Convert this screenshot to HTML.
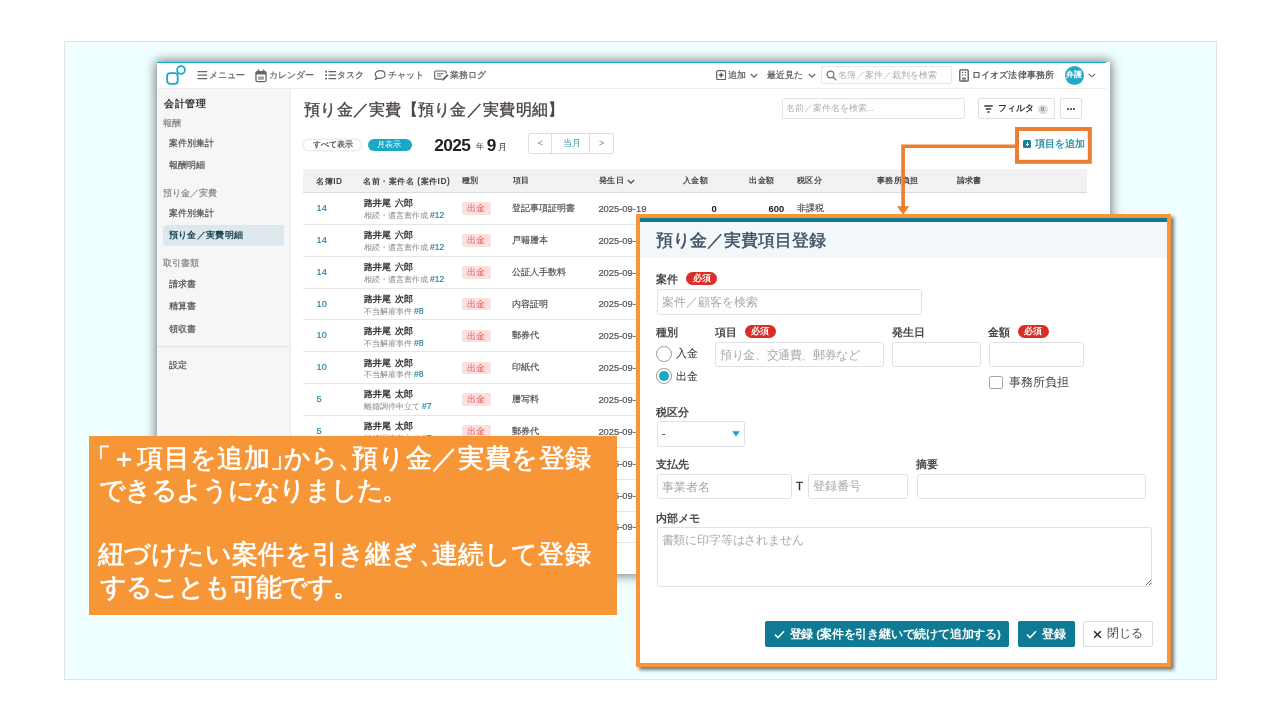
<!DOCTYPE html>
<html lang="ja"><head><meta charset="utf-8"><title>預り金／実費項目登録</title>
<style>
*{box-sizing:border-box;margin:0;padding:0}
html,body{width:1280px;height:720px;overflow:hidden;background:#fff}
body{position:relative;font-family:"Liberation Sans",sans-serif;color:#444}
.a{position:absolute}
.t{position:absolute;white-space:nowrap;line-height:1}
.app,.modal,.note{will-change:transform}
.b{font-weight:bold}
.panel{left:64px;top:41px;width:1153px;height:639px;background:#f0ffff;border:1px solid #e2e2e2}
.app{left:157px;top:62px;width:953px;height:512px;background:#fff;box-shadow:0 0 11px 1px rgba(0,0,0,.55);overflow:hidden}
.modal{left:636px;top:214px;width:535px;height:453px;background:#fff;border:4px solid #f79636;box-shadow:3px 3px 3.5px rgba(0,0,0,.52);overflow:hidden}
.note{left:89px;top:436px;width:528px;height:179px;background:#f79636;color:#fff}

.nv{color:#645e5e;-webkit-text-stroke:0.2px #645e5e}
.sb{color:#555050;-webkit-text-stroke:0.2px #555050}
.sh{color:#858080;-webkit-text-stroke:0.15px #858080}
.th{color:#4a4646;font-weight:bold;letter-spacing:0.4px;margin-left:0.5px}
.td{color:#565252;-webkit-text-stroke:0.2px #565252}
.tl{color:#2589a6;-webkit-text-stroke:0.2px #2589a6}
.pill{border-radius:7px}

.ml{color:#4a4646;font-weight:bold}
.mi{border:1px solid #dde2e8;border-radius:2.500px;background:#fff}
.ph{color:#a9a9a9}
.req{background:#d92d27;border-radius:6.500px}

.nl{position:absolute;left:8.5px;height:32px;line-height:32px;font-size:26px;color:#fff;white-space:nowrap;-webkit-text-stroke:0.65px #fff}
.nj{text-align:justify;text-align-last:justify}
.pl{margin-left:-0.5em}
.pr{margin-right:-0.5em}
</style></head>
<body>
<div class="a panel"></div>
<div class="a app">
<div class="a " style="left:0px;top:0px;width:949px;height:1.3px;background:#1aa9c9"></div>
<div class="a " style="left:0px;top:26px;width:949px;height:1px;background:#ececec"></div>
<svg class="a" style="left:8.2px;top:2.1px;" width="22.00" height="22.00" viewBox="0 0 22 22"><rect x="2.1" y="9.2" width="10.6" height="10.6" rx="3" fill="none" stroke="#1aa9c9" stroke-width="1.8"/><circle cx="16" cy="6" r="3.9" fill="none" stroke="#1aa9c9" stroke-width="1.8"/></svg>
<svg class="a" style="left:40px;top:8px;" width="11.00" height="10.00" viewBox="0 0 11 10"><path d="M0.5 1.6h9.7M0.5 5.1h9.7M0.5 8.6h9.7" stroke="#6a6464" stroke-width="1.4" fill="none"/></svg>
<div class="t nv" style="left:52.15px;top:9.1px;font-size:8.8px;">メニュー</div>
<svg class="a" style="left:98px;top:6.5px;" width="12.00" height="14.00" viewBox="0 0 12 14"><rect x="0.95" y="2.6" width="10.1" height="10" rx="1.5" fill="none" stroke="#6a6464" stroke-width="1.3"/><path d="M0.9 2.6h10.2v2.9H0.9z" fill="#6a6464"/><path d="M3.4 0.6v2.6M8.6 0.6v2.6" stroke="#6a6464" stroke-width="1.5"/><path d="M3.3 7.4h5.4v3.3H3.3z" fill="#8a8585"/><path d="M5.1 7.4v3.3M6.9 7.4v3.3" stroke="#fff" stroke-width="0.5"/></svg>
<div class="t nv" style="left:111.55px;top:9.1px;font-size:8.8px;">カレンダー</div>
<svg class="a" style="left:167.5px;top:8px;" width="12.00" height="10.00" viewBox="0 0 12 10"><path d="M3.5 1.6h7.6M3.5 5.1h7.6M3.5 8.6h7.6" stroke="#6a6464" stroke-width="1.4" fill="none"/><path d="M0.2 1.6h1.8M0.2 5.1h1.8M0.2 8.6h1.8" stroke="#6a6464" stroke-width="1.8" fill="none"/></svg>
<div class="t nv" style="left:180.25px;top:9.1px;font-size:8.8px;">タスク</div>
<svg class="a" style="left:217px;top:7.3px;" width="12.00" height="12.00" viewBox="0 0 12 12"><path d="M6.1 1.7c2.8 0 4.9 1.6 4.9 3.8s-2.100 3.800-4.900 3.800c-.6 0-1.200-.1-1.700-.2L1.600 10.200l.9-2.200C1.600 7.200 1.200 6.400 1.200 5.500c0-2.200 2.100-3.800 4.900-3.800z" fill="none" stroke="#6a6464" stroke-width="1.2"/></svg>
<div class="t nv" style="left:230.95px;top:9.1px;font-size:8.8px;">チャット</div>
<svg class="a" style="left:276.5px;top:8px;" width="15.00" height="12.00" viewBox="0 0 15 12"><path d="M8 9.200H1.800c-.6 0-1.100-.5-1.100-1.100V2.100c0-.6.5-1.100 1.100-1.100h9.300c.6 0 1.100.5 1.100 1.100v1.700" fill="none" stroke="#6a6464" stroke-width="1.2"/><path d="M3 3.700h6.500M3 6h4.200" stroke="#6a6464" stroke-width="1.100"/><path d="M13.300 4.200l1.200 1.200-4.900 4.900-1.700.5.500-1.700z" fill="#5a5555"/></svg>
<div class="t nv" style="left:292.65px;top:9.1px;font-size:8.8px;">業務ログ</div>
<svg class="a" style="left:559.2px;top:7.9px;" width="10.30" height="10.30" viewBox="0 0 11 11"><rect x="0.7" y="0.7" width="9.6" height="9.6" rx="1.5" fill="none" stroke="#645e5e" stroke-width="1.3"/><path d="M5.5 2.900v5.200M2.900 5.500h5.200" stroke="#4a4545" stroke-width="1.400"/></svg>
<div class="t nv" style="left:570.94px;top:9.15px;font-size:8.9px;color:#555050">追加</div>
<svg class="a" style="left:593px;top:11px;" width="8.00" height="6.00" viewBox="0 0 8 6"><path d="M0.8 1l3.200 3.200L7.200 1" fill="none" stroke="#6a6464" stroke-width="1.2"/></svg>
<div class="t nv" style="left:610.05px;top:9.2px;font-size:8.8px;color:#555050">最近見た</div>
<svg class="a" style="left:650.5px;top:11px;" width="8.00" height="6.00" viewBox="0 0 8 6"><path d="M0.8 1l3.200 3.200L7.200 1" fill="none" stroke="#6a6464" stroke-width="1.2"/></svg>
<div class="a " style="left:664.2px;top:3.6px;width:131px;height:18.8px;border:1px solid #e6e6e6;border-radius:2px;background:#fff"></div>
<svg class="a" style="left:669.3px;top:8px;" width="11.00" height="11.00" viewBox="0 0 11 11"><circle cx="4.500" cy="4.500" r="3.400" fill="none" stroke="#777" stroke-width="1.200"/><path d="M7 7l3.200 3.200" stroke="#777" stroke-width="1.300"/></svg>
<div class="t " style="left:681.24px;top:9.12px;font-size:8.95px;color:#ababab">名簿／案件／裁判を検索</div>
<svg class="a" style="left:801.5px;top:7.2px;" width="10.00" height="13.00" viewBox="0 0 10 13"><rect x="0.800" y="0.800" width="8.400" height="11.400" rx="1" fill="none" stroke="#555" stroke-width="1.300"/><path d="M3 3.300h1.200M5.800 3.300H7M3 5.800h1.200M5.800 5.800H7" stroke="#555" stroke-width="1.300"/><path d="M4 12v-3h2v3" fill="none" stroke="#555" stroke-width="1.100"/></svg>
<div class="t " style="left:815.03px;top:9.1px;font-size:9px;letter-spacing:0.1px;color:#4a4646;-webkit-text-stroke:0.2px #4a4646">ロイオズ法律事務所</div>
<div class="a " style="left:907.9px;top:3.7px;width:19.4px;height:19.4px;background:#23a9c8;border-radius:50%"></div>
<div class="t " style="left:908.92px;top:9.4px;font-size:8px;color:#fff;font-weight:bold">弁護</div>
<svg class="a" style="left:931px;top:11.2px;" width="7.80" height="5.20" viewBox="0 0 9 6"><path d="M0.800 1l3.700 3.400L8.200 1" fill="none" stroke="#6a6464" stroke-width="1.300"/></svg>
<div class="a " style="left:0px;top:27px;width:132.7px;height:485px;background:#f6f6f6"></div>
<div class="a " style="left:132.7px;top:27px;width:1px;height:485px;background:#ebebeb"></div>
<div class="t " style="left:6.92px;top:36.65px;font-size:10.3px;letter-spacing:0.7px;color:#3a3636;font-weight:bold">会計管理</div>
<div class="t sh" style="left:6.46px;top:56.62px;font-size:8.75px;">報酬</div>
<div class="t sb" style="left:11.74px;top:76.8px;font-size:9px;">案件別集計</div>
<div class="t sb" style="left:11.74px;top:99.3px;font-size:9px;">報酬明細</div>
<div class="t sh" style="left:6.46px;top:127.12px;font-size:8.75px;">預り金／実費</div>
<div class="t sb" style="left:11.74px;top:147.3px;font-size:9px;">案件別集計</div>
<div class="a " style="left:6px;top:163px;width:121.3px;height:21.3px;background:#dde8ec;border-radius:3px"></div>
<div class="t " style="left:11.73px;top:169.28px;font-size:9.05px;letter-spacing:0.35px;color:#1d4554;font-weight:bold">預り金／実費明細</div>
<div class="t sh" style="left:6.46px;top:197.43px;font-size:8.75px;">取引書類</div>
<div class="t sb" style="left:11.74px;top:217.85px;font-size:8.9px;">請求書</div>
<div class="t sb" style="left:11.74px;top:240.35px;font-size:8.9px;">精算書</div>
<div class="t sb" style="left:11.74px;top:262.85px;font-size:8.9px;">領収書</div>
<div class="a " style="left:0px;top:284.3px;width:132.7px;height:0.9px;background:#e3e3e3"></div>
<div class="t sb" style="left:11.74px;top:298.55px;font-size:8.9px;">設定</div>
<div class="t " style="left:147.07px;top:40.4px;font-size:15.6px;letter-spacing:0.27px;color:#4c4343;-webkit-text-stroke:0.35px #4c4343">預り金／実費【預り金／実費明細】</div>
<div class="a pill" style="left:146.2px;top:76.8px;width:58.8px;height:12px;background:#fff;border:1px solid #ececec;box-shadow:0 0 2px rgba(0,0,0,.12)"></div>
<div class="t " style="left:156.26px;top:79.03px;font-size:7.55px;color:#4a4646;-webkit-text-stroke:0.2px #4a4646">すべて表示</div>
<div class="a pill" style="left:211px;top:77px;width:44px;height:11.6px;background:#19a8c8"></div>
<div class="t " style="left:220.32px;top:78.8px;font-size:8px;color:#fff">月表示</div>
<div class="t " style="left:277.13px;top:75.45px;font-size:17.3px;letter-spacing:-0.6px;color:#222;font-weight:bold">2025</div>
<div class="t " style="left:318.59px;top:80.35px;font-size:8.3px;color:#333">年</div>
<div class="t " style="left:329.73px;top:75.45px;font-size:17.3px;color:#222;font-weight:bold">9</div>
<div class="t " style="left:341.24px;top:80.8px;font-size:9px;color:#333">月</div>
<div class="a " style="left:370.5px;top:71.2px;width:86.3px;height:20.6px;border:1px solid #dedede;border-radius:2px;background:#fff"></div>
<div class="a " style="left:394.3px;top:71.2px;width:0.9px;height:20.6px;background:#dedede"></div>
<div class="a " style="left:432.3px;top:71.2px;width:0.9px;height:20.6px;background:#dedede"></div>
<div class="t " style="left:380.84px;top:76.9px;font-size:9px;color:#3a9ab5">&lt;</div>
<div class="t " style="left:405.62px;top:77px;font-size:9.2px;color:#3a9ab5">当月</div>
<div class="t " style="left:442.03px;top:76.9px;font-size:9px;color:#3a9ab5">&gt;</div>
<div class="a " style="left:624.9px;top:36.4px;width:183.1px;height:20.4px;border:1px solid #e4e4e4;border-radius:2px;background:#fff"></div>
<div class="t " style="left:628.76px;top:42.42px;font-size:8.75px;color:#b0b0b0">名前／案件名を検索...</div>
<div class="a " style="left:821px;top:36.4px;width:77.3px;height:20.4px;border:1px solid #e0e0e0;border-radius:2px;background:#fff"></div>
<svg class="a" style="left:827.3px;top:43px;" width="9.00" height="8.00" viewBox="0 0 9 8"><path d="M0.300 1h8.400M1.800 4h5.400M3.400 7h2.200" stroke="#333" stroke-width="1.300"/></svg>
<div class="t " style="left:840.56px;top:42.45px;font-size:8.7px;color:#333;font-weight:bold">フィルタ</div>
<div class="a " style="left:881.3px;top:42.7px;width:9.4px;height:9.4px;background:#dcdcdc;border-radius:50%"></div>
<div class="t " style="left:883.67px;top:44.4px;font-size:6.2px;color:#555">0</div>
<div class="a " style="left:903.3px;top:36.4px;width:21.3px;height:20.4px;border:1px solid #e0e0e0;border-radius:2px;background:#fff"></div>
<div class="a " style="left:909.8px;top:45.7px;width:2px;height:2px;background:#333;border-radius:50%"></div>
<div class="a " style="left:912.9px;top:45.7px;width:2px;height:2px;background:#333;border-radius:50%"></div>
<div class="a " style="left:916px;top:45.7px;width:2px;height:2px;background:#333;border-radius:50%"></div>
<div class="a " style="left:866.2px;top:78px;width:8.1px;height:8.1px;background:#167f9b;border-radius:1.5px"></div>
<div class="a " style="left:868.6px;top:81.5px;width:3.3px;height:1.1px;background:#fff"></div>
<div class="a " style="left:869.7px;top:80.4px;width:1.1px;height:3.3px;background:#fff"></div>
<div class="t " style="left:877.99px;top:76.85px;font-size:9.5px;letter-spacing:0.1px;color:#1f8ba5;-webkit-text-stroke:0.3px #1f8ba5">項目を追加</div>
<div class="a " style="left:146.2px;top:106.8px;width:784.3px;height:23.2px;background:#f2f2f2"></div>
<div class="a " style="left:146.2px;top:130px;width:784.3px;height:1px;background:#dcdcdc"></div>
<div class="t th" style="left:158.99px;top:115.1px;font-size:8.4px;">名簿ID</div>
<div class="t th" style="left:205.99px;top:115.1px;font-size:8.4px;letter-spacing:0.5px">名前・案件名 (案件ID)</div>
<div class="t th" style="left:304.3px;top:115.2px;font-size:8.2px;">種別</div>
<div class="t th" style="left:355.3px;top:115.2px;font-size:8.2px;">項目</div>
<div class="t th" style="left:441.5px;top:115.2px;font-size:8.2px;">発生日</div>
<svg class="a" style="left:469.5px;top:117px;" width="8.00" height="6.00" viewBox="0 0 8 6"><path d="M0.800 1l3.200 3.200L7.200 1" fill="none" stroke="#4a4646" stroke-width="1.200"/></svg>
<div class="t th" style="left:525.3px;top:115.2px;font-size:8.2px;">入金額</div>
<div class="t th" style="left:591.8px;top:115.2px;font-size:8.2px;">出金額</div>
<div class="t th" style="left:639.3px;top:115.2px;font-size:8.2px;">税区分</div>
<div class="t th" style="left:719.3px;top:115.2px;font-size:8.2px;">事務所負担</div>
<div class="t th" style="left:799px;top:115.2px;font-size:8.2px;">請求書</div>
<div class="a " style="left:146.2px;top:161.85px;width:784.3px;height:1px;background:#e6e6e6"></div>
<div class="t tl" style="left:159.52px;top:142.03px;font-size:9.2px;">14</div>
<div class="t " style="left:206.6px;top:136.3px;font-size:9.45px;color:#353131;font-weight:bold;word-spacing:1.4px">路井尾 六郎</div>
<div class="t " style="left:206.74px;top:149.12px;font-size:7.8px;color:#8a8686">相続・遺言書作成 <span class="tl" style="font-size:8.6px">#12</span></div>
<div class="a " style="left:305px;top:140.32px;width:28.8px;height:12.6px;background:#fce0e0;border-radius:2px"></div>
<div class="t " style="left:309.96px;top:142.28px;font-size:8.7px;color:#e15a5a">出金</div>
<div class="t td" style="left:355.23px;top:142.07px;font-size:9.1px;">登記事項証明書</div>
<div class="t td" style="left:441.4px;top:141.93px;font-size:9.4px;">2025-09-19</div>
<div class="t " style="right:393.2px;top:141.93px;font-size:9.4px;color:#222;font-weight:bold">0</div>
<div class="t " style="right:325.8px;top:141.93px;font-size:9.4px;color:#222;font-weight:bold">600</div>
<div class="t td" style="left:639.73px;top:142.07px;font-size:9.1px;">非課税</div>
<div class="a " style="left:146.2px;top:193.7px;width:784.3px;height:1px;background:#e6e6e6"></div>
<div class="t tl" style="left:159.52px;top:173.88px;font-size:9.2px;">14</div>
<div class="t " style="left:206.6px;top:168.15px;font-size:9.45px;color:#353131;font-weight:bold;word-spacing:1.4px">路井尾 六郎</div>
<div class="t " style="left:206.74px;top:180.97px;font-size:7.8px;color:#8a8686">相続・遺言書作成 <span class="tl" style="font-size:8.6px">#12</span></div>
<div class="a " style="left:305px;top:172.17px;width:28.8px;height:12.6px;background:#fce0e0;border-radius:2px"></div>
<div class="t " style="left:309.96px;top:174.12px;font-size:8.7px;color:#e15a5a">出金</div>
<div class="t td" style="left:355.23px;top:173.92px;font-size:9.1px;">戸籍謄本</div>
<div class="t td" style="left:441.4px;top:173.78px;font-size:9.4px;">2025-09-18</div>
<div class="a " style="left:146.2px;top:225.55px;width:784.3px;height:1px;background:#e6e6e6"></div>
<div class="t tl" style="left:159.52px;top:205.72px;font-size:9.2px;">14</div>
<div class="t " style="left:206.6px;top:200px;font-size:9.45px;color:#353131;font-weight:bold;word-spacing:1.4px">路井尾 六郎</div>
<div class="t " style="left:206.74px;top:212.82px;font-size:7.8px;color:#8a8686">相続・遺言書作成 <span class="tl" style="font-size:8.6px">#12</span></div>
<div class="a " style="left:305px;top:204.02px;width:28.8px;height:12.6px;background:#fce0e0;border-radius:2px"></div>
<div class="t " style="left:309.96px;top:205.97px;font-size:8.7px;color:#e15a5a">出金</div>
<div class="t td" style="left:355.23px;top:205.77px;font-size:9.1px;">公証人手数料</div>
<div class="t td" style="left:441.4px;top:205.62px;font-size:9.4px;">2025-09-17</div>
<div class="a " style="left:146.2px;top:257.4px;width:784.3px;height:1px;background:#e6e6e6"></div>
<div class="t tl" style="left:159.52px;top:237.57px;font-size:9.2px;">10</div>
<div class="t " style="left:206.6px;top:231.85px;font-size:9.45px;color:#353131;font-weight:bold;word-spacing:1.4px">路井尾 次郎</div>
<div class="t " style="left:206.74px;top:244.68px;font-size:7.8px;color:#8a8686">不当解雇事件 <span class="tl" style="font-size:8.6px">#8</span></div>
<div class="a " style="left:305px;top:235.88px;width:28.8px;height:12.6px;background:#fce0e0;border-radius:2px"></div>
<div class="t " style="left:309.96px;top:237.82px;font-size:8.7px;color:#e15a5a">出金</div>
<div class="t td" style="left:355.23px;top:237.62px;font-size:9.1px;">内容証明</div>
<div class="t td" style="left:441.4px;top:237.48px;font-size:9.4px;">2025-09-16</div>
<div class="a " style="left:146.2px;top:289.25px;width:784.3px;height:1px;background:#e6e6e6"></div>
<div class="t tl" style="left:159.52px;top:269.42px;font-size:9.2px;">10</div>
<div class="t " style="left:206.6px;top:263.7px;font-size:9.45px;color:#353131;font-weight:bold;word-spacing:1.4px">路井尾 次郎</div>
<div class="t " style="left:206.74px;top:276.52px;font-size:7.8px;color:#8a8686">不当解雇事件 <span class="tl" style="font-size:8.6px">#8</span></div>
<div class="a " style="left:305px;top:267.72px;width:28.8px;height:12.6px;background:#fce0e0;border-radius:2px"></div>
<div class="t " style="left:309.96px;top:269.67px;font-size:8.7px;color:#e15a5a">出金</div>
<div class="t td" style="left:355.23px;top:269.47px;font-size:9.1px;">郵券代</div>
<div class="t td" style="left:441.4px;top:269.32px;font-size:9.4px;">2025-09-12</div>
<div class="a " style="left:146.2px;top:321.1px;width:784.3px;height:1px;background:#e6e6e6"></div>
<div class="t tl" style="left:159.52px;top:301.27px;font-size:9.2px;">10</div>
<div class="t " style="left:206.6px;top:295.55px;font-size:9.45px;color:#353131;font-weight:bold;word-spacing:1.4px">路井尾 次郎</div>
<div class="t " style="left:206.74px;top:308.38px;font-size:7.8px;color:#8a8686">不当解雇事件 <span class="tl" style="font-size:8.6px">#8</span></div>
<div class="a " style="left:305px;top:299.57px;width:28.8px;height:12.6px;background:#fce0e0;border-radius:2px"></div>
<div class="t " style="left:309.96px;top:301.52px;font-size:8.7px;color:#e15a5a">出金</div>
<div class="t td" style="left:355.23px;top:301.32px;font-size:9.1px;">印紙代</div>
<div class="t td" style="left:441.4px;top:301.18px;font-size:9.4px;">2025-09-11</div>
<div class="a " style="left:146.2px;top:352.95px;width:784.3px;height:1px;background:#e6e6e6"></div>
<div class="t tl" style="left:159.52px;top:333.12px;font-size:9.2px;">5</div>
<div class="t " style="left:206.6px;top:327.4px;font-size:9.45px;color:#353131;font-weight:bold;word-spacing:1.4px">路井尾 太郎</div>
<div class="t " style="left:206.74px;top:340.23px;font-size:7.8px;color:#8a8686">離婚調停申立て <span class="tl" style="font-size:8.6px">#7</span></div>
<div class="a " style="left:305px;top:331.43px;width:28.8px;height:12.6px;background:#fce0e0;border-radius:2px"></div>
<div class="t " style="left:309.96px;top:333.38px;font-size:8.7px;color:#e15a5a">出金</div>
<div class="t td" style="left:355.23px;top:333.18px;font-size:9.1px;">謄写料</div>
<div class="t td" style="left:441.4px;top:333.03px;font-size:9.4px;">2025-09-10</div>
<div class="a " style="left:146.2px;top:384.8px;width:784.3px;height:1px;background:#e6e6e6"></div>
<div class="t tl" style="left:159.52px;top:364.98px;font-size:9.2px;">5</div>
<div class="t " style="left:206.6px;top:359.25px;font-size:9.45px;color:#353131;font-weight:bold;word-spacing:1.4px">路井尾 太郎</div>
<div class="t " style="left:206.74px;top:372.08px;font-size:7.8px;color:#8a8686">離婚調停申立て <span class="tl" style="font-size:8.6px">#7</span></div>
<div class="a " style="left:305px;top:363.28px;width:28.8px;height:12.6px;background:#fce0e0;border-radius:2px"></div>
<div class="t " style="left:309.96px;top:365.23px;font-size:8.7px;color:#e15a5a">出金</div>
<div class="t td" style="left:355.23px;top:365.03px;font-size:9.1px;">郵券代</div>
<div class="t td" style="left:441.4px;top:364.88px;font-size:9.4px;">2025-09-09</div>
<div class="a " style="left:146.2px;top:416.65px;width:784.3px;height:1px;background:#e6e6e6"></div>
<div class="t tl" style="left:159.52px;top:396.82px;font-size:9.2px;">5</div>
<div class="t " style="left:206.6px;top:391.1px;font-size:9.45px;color:#353131;font-weight:bold;word-spacing:1.4px">路井尾 太郎</div>
<div class="t " style="left:206.74px;top:403.93px;font-size:7.8px;color:#8a8686">離婚調停申立て <span class="tl" style="font-size:8.6px">#7</span></div>
<div class="a " style="left:305px;top:395.12px;width:28.8px;height:12.6px;background:#fce0e0;border-radius:2px"></div>
<div class="t " style="left:309.96px;top:397.07px;font-size:8.7px;color:#e15a5a">出金</div>
<div class="t td" style="left:355.23px;top:396.88px;font-size:9.1px;">印紙代</div>
<div class="t td" style="left:441.4px;top:396.73px;font-size:9.4px;">2025-09-08</div>
<div class="a " style="left:146.2px;top:448.5px;width:784.3px;height:1px;background:#e6e6e6"></div>
<div class="t tl" style="left:159.52px;top:428.68px;font-size:9.2px;">3</div>
<div class="t " style="left:206.6px;top:422.95px;font-size:9.45px;color:#353131;font-weight:bold;word-spacing:1.4px">路井尾 花子</div>
<div class="t " style="left:206.74px;top:435.78px;font-size:7.8px;color:#8a8686">遺産分割協議 <span class="tl" style="font-size:8.6px">#5</span></div>
<div class="a " style="left:305px;top:426.98px;width:28.8px;height:12.6px;background:#fce0e0;border-radius:2px"></div>
<div class="t " style="left:309.96px;top:428.93px;font-size:8.7px;color:#e15a5a">出金</div>
<div class="t td" style="left:355.23px;top:428.73px;font-size:9.1px;">交通費</div>
<div class="t td" style="left:441.4px;top:428.58px;font-size:9.4px;">2025-09-05</div>
<div class="a " style="left:146.2px;top:480.35px;width:784.3px;height:1px;background:#e6e6e6"></div>
<div class="t tl" style="left:159.52px;top:460.52px;font-size:9.2px;">3</div>
<div class="t " style="left:206.6px;top:454.8px;font-size:9.45px;color:#353131;font-weight:bold;word-spacing:1.4px">路井尾 花子</div>
<div class="t " style="left:206.74px;top:467.62px;font-size:7.8px;color:#8a8686">遺産分割協議 <span class="tl" style="font-size:8.6px">#5</span></div>
<div class="a " style="left:305px;top:458.83px;width:28.8px;height:12.6px;background:#fce0e0;border-radius:2px"></div>
<div class="t " style="left:309.96px;top:460.77px;font-size:8.7px;color:#e15a5a">出金</div>
<div class="t td" style="left:355.23px;top:460.58px;font-size:9.1px;">郵券代</div>
<div class="t td" style="left:441.4px;top:460.42px;font-size:9.4px;">2025-09-03</div>
<div class="a " style="left:949px;top:0px;width:4px;height:512px;background:#fff"></div>
</div>
<svg class="a" style="left:880px;top:120px" width="230" height="100" viewBox="880 120 230 100">
<rect x="1017" y="129" width="72.800" height="32.800" fill="none" stroke="#ed7d31" stroke-width="4"/>
<path d="M1015 146.200H903.100V207" fill="none" stroke="#ed7d31" stroke-width="3.600"/>
<path d="M897 206.200h12.200L903.100 214.700z" fill="#ed7d31"/>
</svg>
<div class="a modal">
<div class="a " style="left:0px;top:0px;width:527px;height:4px;background:#0f7a94"></div>
<div class="a " style="left:0px;top:4px;width:527px;height:35.6px;background:#f3f7fa"></div>
<div class="t " style="left:15.55px;top:13.7px;font-size:17px;color:#3d5165;-webkit-text-stroke:0.45px #3d5165">預り金／実費項目登録</div>
<div class="t ml" style="left:16.1px;top:56.3px;font-size:10.6px;">案件</div>
<div class="a req" style="left:46.2px;top:54.1px;width:31.1px;height:12.9px;"></div>
<div class="t " style="left:52.58px;top:56.35px;font-size:8.5px;color:#fff;font-weight:bold">必須</div>
<div class="a mi" style="left:16.7px;top:71px;width:265.1px;height:25.6px;"></div>
<div class="t ph" style="left:21.51px;top:77.95px;font-size:11.7px;">案件／顧客を検索</div>
<div class="t ml" style="left:16.1px;top:108.9px;font-size:10.6px;">種別</div>
<div class="t ml" style="left:74.8px;top:108.9px;font-size:10.6px;">項目</div>
<div class="a req" style="left:104.5px;top:106.7px;width:31.1px;height:12.9px;"></div>
<div class="t " style="left:110.88px;top:108.95px;font-size:8.5px;color:#fff;font-weight:bold">必須</div>
<div class="t ml" style="left:251.59px;top:108.85px;font-size:10.7px;">発生日</div>
<div class="t ml" style="left:348.29px;top:108.85px;font-size:10.7px;">金額</div>
<div class="a req" style="left:377.7px;top:106.7px;width:31.1px;height:12.9px;"></div>
<div class="t " style="left:384.08px;top:108.95px;font-size:8.5px;color:#fff;font-weight:bold">必須</div>
<div class="a " style="left:16.4px;top:127.9px;width:15.7px;height:15.7px;border:1px solid #9a9a9a;border-radius:50%;background:#fff"></div>
<div class="t " style="left:36.33px;top:130.2px;font-size:11.4px;color:#353131">入金</div>
<div class="a " style="left:16.4px;top:150.4px;width:15.7px;height:15.7px;border:1px solid #9a9a9a;border-radius:50%;background:#fff"></div>
<div class="a " style="left:19.3px;top:153.3px;width:9.9px;height:9.9px;border-radius:50%;background:#19a8c8"></div>
<div class="t " style="left:36.33px;top:152.7px;font-size:11.4px;color:#353131">出金</div>
<div class="a mi" style="left:75px;top:123.7px;width:168.8px;height:25.1px;"></div>
<div class="t ph" style="left:80.21px;top:130.6px;font-size:11.6px;letter-spacing:-0.4px">預り金、交通費、郵券など</div>
<div class="a mi" style="left:252px;top:123.7px;width:88.8px;height:25.1px;"></div>
<div class="a mi" style="left:349px;top:123.7px;width:94.5px;height:25.1px;"></div>
<div class="a " style="left:349.2px;top:157.5px;width:13.8px;height:13.3px;border:1px solid #a8a8a8;border-radius:2px;background:#fff"></div>
<div class="t " style="left:368.5px;top:159.4px;font-size:11.8px;color:#4a4646">事務所負担</div>
<div class="t ml" style="left:16.08px;top:188.8px;font-size:10.8px;">税区分</div>
<div class="a mi" style="left:16.7px;top:203.2px;width:88.6px;height:25.4px;"></div>
<div class="t " style="left:22.07px;top:210.1px;font-size:11px;color:#333">-</div>
<svg class="a" style="left:91.8px;top:213px;" width="8.00" height="6.00" viewBox="0 0 8 6"><path d="M0.200 0.300h7.600L4 5.800z" fill="#19a8c8"/></svg>
<div class="t ml" style="left:16.08px;top:241.2px;font-size:10.8px;">支払先</div>
<div class="t ml" style="left:276.09px;top:241.25px;font-size:10.7px;">摘要</div>
<div class="a mi" style="left:16.7px;top:256.2px;width:135.8px;height:25.1px;"></div>
<div class="t ph" style="left:21.51px;top:263.2px;font-size:11.6px;">事業者名</div>
<div class="t " style="left:156.02px;top:263.25px;font-size:11.5px;color:#333;-webkit-text-stroke:0.3px #333">T</div>
<div class="a mi" style="left:168px;top:256.2px;width:100.3px;height:25.1px;"></div>
<div class="t ph" style="left:173.22px;top:263.25px;font-size:11.5px;">登録番号</div>
<div class="a mi" style="left:276.5px;top:256.2px;width:229px;height:25.1px;"></div>
<div class="t ml" style="left:16.07px;top:294.75px;font-size:10.9px;">内部メモ</div>
<div class="a mi" style="left:16.7px;top:308.7px;width:495.8px;height:60.1px;"></div>
<div class="t ph" style="left:21.51px;top:315.55px;font-size:11.7px;letter-spacing:-0.15px">書類に印字等はされません</div>
<svg class="a" style="left:504.5px;top:361px;" width="7.00" height="7.00" viewBox="0 0 7 7"><path d="M6.300 0.800L0.800 6.300M6.300 3.800L3.800 6.300" stroke="#555" stroke-width="0.900"/></svg>
<div class="a " style="left:125px;top:403.2px;width:244px;height:25.8px;background:#0f7a94;border-radius:2px"></div>
<svg class="a" style="left:133.5px;top:411.5px;" width="11.00" height="9.00" viewBox="0 0 11 9"><path d="M1 4.600l3 3L10 1.300" fill="none" stroke="#fff" stroke-width="1.500"/></svg>
<div class="t " style="left:149.61px;top:410.38px;font-size:11.65px;letter-spacing:-0.2px;color:#fff;font-weight:bold">登録 (案件を引き継いで続けて追加する)</div>
<div class="a " style="left:377.5px;top:403.2px;width:57.5px;height:25.8px;background:#0f7a94;border-radius:2px"></div>
<svg class="a" style="left:386.2px;top:411.5px;" width="11.00" height="9.00" viewBox="0 0 11 9"><path d="M1 4.600l3 3L10 1.300" fill="none" stroke="#fff" stroke-width="1.500"/></svg>
<div class="t " style="left:401.51px;top:410.35px;font-size:11.7px;color:#fff;font-weight:bold">登録</div>
<div class="a " style="left:443.2px;top:403.2px;width:69.4px;height:25.8px;background:#fff;border:1px solid #dcdcdc;border-radius:2px"></div>
<svg class="a" style="left:452.5px;top:412px;" width="9.00" height="9.00" viewBox="0 0 9 9"><path d="M1.200 1.200l6.600 6.600M7.800 1.200L1.200 7.800" stroke="#222" stroke-width="1.400"/></svg>
<div class="t " style="left:466.6px;top:410.3px;font-size:11.8px;color:#4a4646">閉じる</div>
</div>
<div class="a note">
<div class="nl nj" style="top:6.3px;width:493.5px"><span class="pl">「</span>＋項目を追加<span class="pr">」</span>から<span class="pr">、</span>預り金／実費を登録</div>
<div class="nl" style="top:38px;left:10px;letter-spacing:-1.25px">できるようになりました。</div>
<div class="nl nj" style="top:102.4px;width:493px">紐づけたい案件を引き継ぎ<span class="pr">、</span>連続して登録</div>
<div class="nl" style="top:134.5px;left:11px;letter-spacing:-0.9px">することも可能です。</div>
</div>
</body></html>
